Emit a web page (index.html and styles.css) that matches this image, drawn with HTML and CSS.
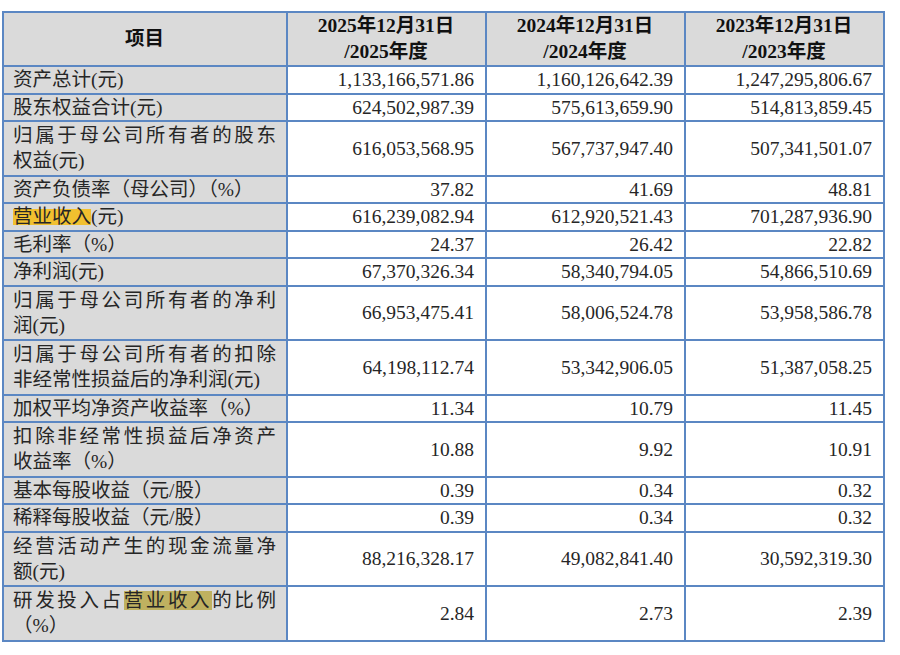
FILE: index.html
```html
<!DOCTYPE html>
<html lang="zh-CN">
<head>
<meta charset="utf-8">
<title>主要财务数据</title>
<link rel="stylesheet" href="styles.css">
</head>
<body>
<table class="fin">
  <colgroup>
    <col class="c-label">
    <col class="c-num">
    <col class="c-num">
    <col class="c-num">
  </colgroup>
  <thead>
    <tr class="r-head">
      <th>项目</th>
      <th>2025年12月31日<br>/2025年度</th>
      <th>2024年12月31日<br>/2024年度</th>
      <th>2023年12月31日<br>/2023年度</th>
    </tr>
  </thead>
  <tbody>
    <tr class="r1"><td class="lbl">资产总计(元)</td><td>1,133,166,571.86</td><td>1,160,126,642.39</td><td>1,247,295,806.67</td></tr>
    <tr class="r1"><td class="lbl">股东权益合计(元)</td><td>624,502,987.39</td><td>575,613,659.90</td><td>514,813,859.45</td></tr>
    <tr class="r2"><td class="lbl"><span class="jl">归属于母公司所有者的股东</span>权益(元)</td><td>616,053,568.95</td><td>567,737,947.40</td><td>507,341,501.07</td></tr>
    <tr class="r1"><td class="lbl">资产负债率（母公司）（%）</td><td>37.82</td><td>41.69</td><td>48.81</td></tr>
    <tr class="r1"><td class="lbl"><span class="hl-a">营业收入</span>(元)</td><td>616,239,082.94</td><td>612,920,521.43</td><td>701,287,936.90</td></tr>
    <tr class="r1"><td class="lbl">毛利率（%）</td><td>24.37</td><td>26.42</td><td>22.82</td></tr>
    <tr class="r1"><td class="lbl">净利润(元)</td><td>67,370,326.34</td><td>58,340,794.05</td><td>54,866,510.69</td></tr>
    <tr class="r2"><td class="lbl"><span class="jl">归属于母公司所有者的净利</span>润(元)</td><td>66,953,475.41</td><td>58,006,524.78</td><td>53,958,586.78</td></tr>
    <tr class="r2"><td class="lbl"><span class="jl">归属于母公司所有者的扣除</span>非经常性损益后的净利润(元)</td><td>64,198,112.74</td><td>53,342,906.05</td><td>51,387,058.25</td></tr>
    <tr class="r1"><td class="lbl">加权平均净资产收益率（%）</td><td>11.34</td><td>10.79</td><td>11.45</td></tr>
    <tr class="r2"><td class="lbl"><span class="jl">扣除非经常性损益后净资产</span>收益率（%）</td><td>10.88</td><td>9.92</td><td>10.91</td></tr>
    <tr class="r1"><td class="lbl">基本每股收益（元/股）</td><td>0.39</td><td>0.34</td><td>0.32</td></tr>
    <tr class="r1"><td class="lbl">稀释每股收益（元/股）</td><td>0.39</td><td>0.34</td><td>0.32</td></tr>
    <tr class="r2"><td class="lbl"><span class="jl">经营活动产生的现金流量净</span>额(元)</td><td>88,216,328.17</td><td>49,082,841.40</td><td>30,592,319.30</td></tr>
    <tr class="r2"><td class="lbl"><span class="jl">研发投入占<span class="hl-b">营业收入</span>的比例</span>（%）</td><td>2.84</td><td>2.73</td><td>2.39</td></tr>
  </tbody>
</table>
</body>
</html>
```

FILE: styles.css
```css
html, body {
  margin: 0;
  padding: 0;
  background: #ffffff;
}

body {
  padding: 11px 0 0 2px;
  font-family: "Liberation Serif", "Noto Sans CJK SC", serif;
  color: #262626;
}

.fin {
  border-collapse: collapse;
  table-layout: fixed;
  width: 882px;
  font-size: 19.5px;
}

.c-label { width: 284px; }
.c-num { width: 199px; }

.fin th,
.fin td {
  border: 2px solid #5b87c3;
  padding: 0 11px 0 10px;
  line-height: 25px;
  vertical-align: middle;
  text-align: right;
  white-space: nowrap;
}

.fin th {
  background: #dadada;
  color: #111111;
  font-weight: bold;
  text-align: center;
  font-size: 19.5px;
  line-height: 26px;
}

.r-head { height: 54px; }
.r1 { height: 27.5px; }
.r2 { height: 54.5px; }

.fin td.lbl {
  background: #dadada;
  text-align: left;
  padding: 0 10px 0 9px;
}

.jl {
  display: block;
  text-align: justify;
  text-align-last: justify;
}

.hl-a {
  background: linear-gradient(to bottom, transparent 12%, #f1c02f 12%, #f1c02f 92%, transparent 92%);
}

.hl-b {
  background: linear-gradient(to bottom, transparent 6%, #bfb160 6%, #bfb160 96%, transparent 96%);
}
```
